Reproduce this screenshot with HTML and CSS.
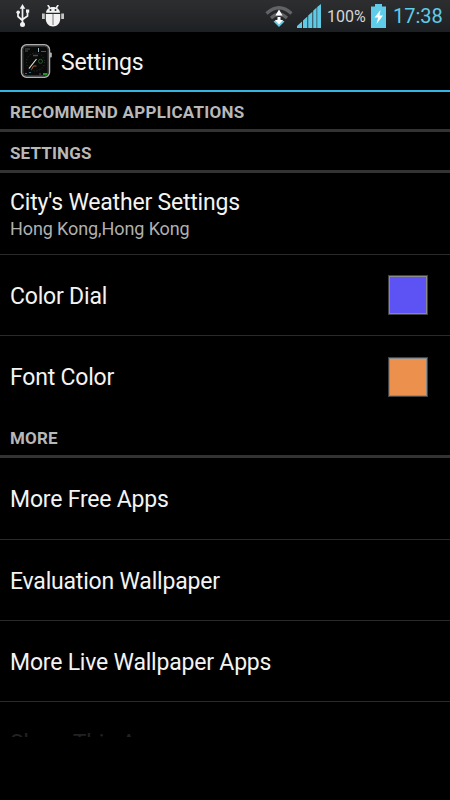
FILE: index.html
```html
<!DOCTYPE html>
<html lang="en">
<head>
    <meta charset="UTF-8">
    <meta name="viewport" content="width=device-width, initial-scale=1.0">
    <title>Settings</title>
    <link rel="stylesheet" href="styles.css">
</head>
<body>
    <div class="screen">
        <div class="status-bar">
            <svg class="icon-usb" width="14" height="24" viewBox="0 0 14 24">
                <path d="M6.500 3V21M2 8v4.500L6.500 16.500M11.500 7v5L6.500 15.500" fill="none" stroke="#f2f2f2" stroke-width="1.700"/>
                <path d="M6.500 0L9.300 4.800H3.700Z" fill="#f2f2f2"/>
                <circle cx="2.200" cy="8.300" r="1.800" fill="#f2f2f2"/>
                <rect x="10" y="5.500" width="3.200" height="3.200" fill="#f2f2f2"/>
                <circle cx="6.500" cy="20.500" r="2.500" fill="#f2f2f2"/>
            </svg>
            <svg class="icon-debug" width="22" height="22" viewBox="0 0 22 22">
                <path d="M5.800 0l2 3M16.200 0l-2 3" stroke="#f2f2f2" stroke-width="1.600"/>
                <path d="M4 7.800C4.300 4.200 7.200 2 11 2s6.700 2.200 7 5.800Z" fill="#f2f2f2"/>
                <path d="M3.800 9H18.200V14c0 4-3 7.500-7.200 7.500S3.800 18 3.800 14Z" fill="#f2f2f2"/>
                <path d="M0 8.500h2.800v5.500H0ZM19.200 8.500H22v5.500h-2.800Z" fill="#c4c4c4"/>
                <path d="M11 9v11" stroke="#77787a" stroke-width="1"/>
                <circle cx="8.500" cy="5" r="1" fill="#292a2c"/>
                <circle cx="13.500" cy="5" r="1" fill="#292a2c"/>
            </svg>
            <div class="status-right">
                <svg class="icon-wifi" width="28" height="22" viewBox="0 0 28 22">
                    <path d="M1.500 7.500Q14-4 26.500 7.500" fill="none" stroke="#626365" stroke-width="3.200"/>
                    <path d="M6 12Q14 4.500 22 12" fill="none" stroke="#626365" stroke-width="3.200"/>
                    <path d="M14 21L8.500 15.500q5.500-4 11 0Z" fill="#63cbe8"/>
                    <path d="M14 3.500l3.600 6H10.400ZM14 18.500l-4-4.500h2.500V11h3v3H18Z" fill="#fff"/>
                </svg>
                <svg class="icon-signal" width="24" height="24" viewBox="0 0 24 24">
                    <path d="M0 24v-2l5-4.500V24ZM6 24v-7.400l4.400-4.100V24ZM11.200 24V11.600l4.200-3.800V24ZM16.200 24V6.800l3.400-3.200V24ZM20.200 24V3L24 0v24Z" fill="#5fc9e6"/>
                </svg>
                <span class="battery-text">100%</span>
                <svg class="icon-battery" width="15" height="24" viewBox="0 0 15 24">
                    <path d="M4 0h7v2.500h4V24H0V2.500h4Z" fill="#5fcde9"/>
                    <path d="M9.500 6L3.500 13.500h3.700L5.500 20 12 11.500H8.500Z" fill="#fff"/>
                </svg>
                <span class="clock">17:38</span>
            </div>
        </div>

        <div class="action-bar">
            <svg class="app-icon" width="32" height="36" viewBox="0 0 32 36">
                <rect x="29" y="9.500" width="2.800" height="5" rx="1" fill="#b5b5b5"/>
                <rect x="1.500" y="1.700" width="28" height="32.500" rx="5" fill="#080909" stroke="#adadad" stroke-width="1.500"/>
                <rect x="2.900" y="3.100" width="25.200" height="29.700" rx="3.500" fill="none" stroke="#454545" stroke-width="1"/>
                <circle cx="15.500" cy="19" r="9" fill="none" stroke="#343a3a" stroke-width="1" stroke-dasharray="1 2"/>
                <path d="M13 12.500h5" stroke="#4c4c4c" stroke-width="1.500"/>
                <circle cx="20.500" cy="18.300" r="2" fill="none" stroke="#24602c"/>
                <path d="M5 6h5M5 8h3M21 8.500h5" stroke="#4d5555"/>
                <path d="M18.500 5v4" stroke="#9bb0bd"/>
                <path d="M9 25.500l7.500-9.500" stroke="#e5e0d8" stroke-width="1.200"/>
                <path d="M11.500 26.500l2-3.500h3" fill="none" stroke="#a8642e" stroke-width="1"/>
                <path d="M5 30.500h2M9 29.500h2" stroke="#2a6c8c" stroke-width="1.200"/>
                <path d="M19 31h2" stroke="#555"/>
                <path d="M23 31h4" stroke="#22b52b" stroke-width="1.700"/>
            </svg>
            <span class="title">Settings</span>
        </div>

        <div class="list">
            <div class="category first">RECOMMEND APPLICATIONS</div>
            <div class="category">SETTINGS</div>
            <div class="row two-line">
                <div class="row-text">
                    <div class="row-title">City's Weather Settings</div>
                    <div class="summary">Hong Kong,Hong Kong</div>
                </div>
            </div>
            <div class="row">
                <div class="row-title">Color Dial</div>
                <div class="swatch dial"></div>
            </div>
            <div class="row last">
                <div class="row-title">Font Color</div>
                <div class="swatch font"></div>
            </div>
            <div class="category">MORE</div>
            <div class="row tall"><div class="row-title">More Free Apps</div></div>
            <div class="row"><div class="row-title">Evaluation Wallpaper</div></div>
            <div class="row"><div class="row-title">More Live Wallpaper Apps</div></div>
            <div class="row last fading"><div class="row-title">Share This App</div></div>
        </div>
    </div>
</body>
</html>
```

FILE: styles.css
```css
* {
    box-sizing: border-box;
}
body {
    margin: 0;
    background: #000;
    font-family: Roboto, sans-serif;
    color: #f3f3f3;
}
.screen {
    width: 450px;
    height: 800px;
    background: #000;
    overflow: hidden;
}
svg {
    display: block;
    flex-shrink: 0;
}

/* status bar */
.status-bar {
    display: flex;
    height: 32px;
    padding: 0 7px 0 16px;
    background: linear-gradient(#2e2e30, #1d2023);
}
.icon-usb {
    margin-top: 4px;
}
.icon-debug {
    margin: 5px 0 0 12px;
}
.status-right {
    display: flex;
    margin-left: auto;
}
.icon-wifi {
    margin: 6px 4px 0 0;
}
.icon-signal {
    margin: 4px 6px 0 0;
}
.battery-text {
    width: 40px;
    margin-right: 3px;
    font-size: 16px;
    line-height: 33px;
    color: #d6d6d6;
    white-space: nowrap;
}
.icon-battery {
    margin: 4px 7px 0 1px;
}
.clock {
    width: 50px;
    font-size: 20px;
    line-height: 32px;
    color: #5fcde9;
    white-space: nowrap;
}

/* action bar */
.action-bar {
    display: flex;
    align-items: center;
    height: 60px;
    padding-left: 20px;
    border-bottom: 2px solid #33b5e5;
}
.title {
    margin-left: 9px;
    padding-top: 3px;
    font-size: 23px;
    line-height: 26px;
    letter-spacing: -0.2px;
}

/* preference list */
.list {
    height: 645px;
    overflow: hidden;
}
.category {
    height: 41px;
    padding: 0 10px;
    border-bottom: 3px solid #333;
    font-size: 17px;
    font-weight: 700;
    line-height: 43px;
    letter-spacing: 0.15px;
    color: #b8b8b8;
}
.category.first {
    height: 40px;
    line-height: 41px;
    letter-spacing: 0.27px;
}
.row {
    display: flex;
    align-items: center;
    justify-content: space-between;
    height: 81px;
    padding: 0 22px 0 10px;
    border-bottom: 1px solid #2a2a2a;
}
.row.two-line,
.row.tall {
    height: 82px;
}
.row.last {
    border-bottom: 0;
}
.row-title {
    padding-top: 2px;
    font-size: 23px;
    line-height: 27px;
    letter-spacing: -0.2px;
    white-space: nowrap;
}
.summary {
    font-size: 18px;
    line-height: 25px;
    letter-spacing: -0.1px;
    color: #b0b0b0;
}
.swatch {
    width: 40px;
    height: 40px;
    border: 1px solid #444;
    box-shadow: inset 0 0 0 1px #8a8a8a;
}
.dial {
    background: #5d52f3;
}
.font {
    background: #ec914d;
}
.fading {
    color: #222;
}
```
